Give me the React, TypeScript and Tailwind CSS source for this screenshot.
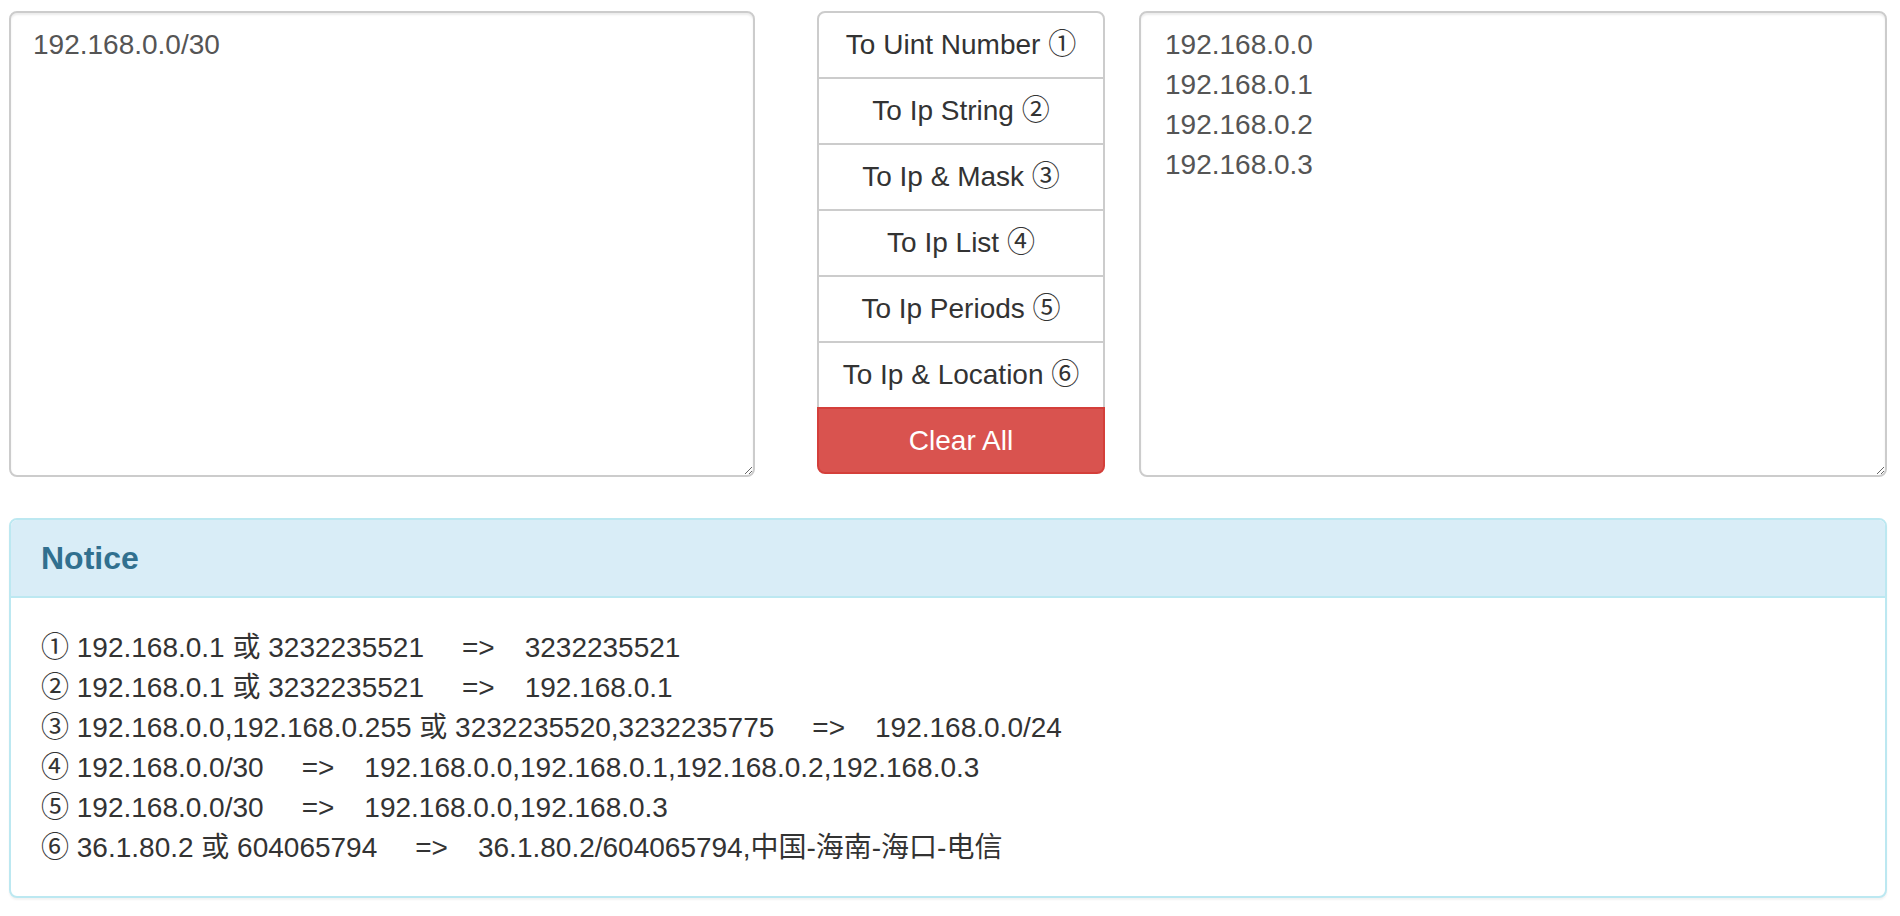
import { useState } from 'react'

const font = { fontFamily: '"Liberation Sans", "Noto Sans CJK SC", sans-serif' }

const buttons = [
  'To Uint Number ①',
  'To Ip String ②',
  'To Ip & Mask ③',
  'To Ip List ④',
  'To Ip Periods ⑤',
  'To Ip & Location ⑥',
]

const notices: [string, string][] = [
  ['① 192.168.0.1 或 3232235521', '3232235521'],
  ['② 192.168.0.1 或 3232235521', '192.168.0.1'],
  ['③ 192.168.0.0,192.168.0.255 或 3232235520,3232235775', '192.168.0.0/24'],
  ['④ 192.168.0.0/30', '192.168.0.0,192.168.0.1,192.168.0.2,192.168.0.3'],
  ['⑤ 192.168.0.0/30', '192.168.0.0,192.168.0.3'],
  ['⑥ 36.1.80.2 或 604065794', '36.1.80.2/604065794,中国-海南-海口-电信'],
]

export default function App() {
  const [input, setInput] = useState('192.168.0.0/30')
  const [output, setOutput] = useState('192.168.0.0\n192.168.0.1\n192.168.0.2\n192.168.0.3')

  return (
    <div className="min-h-screen bg-white pl-[9px] pr-[13px] pt-[11px]" style={font}>
      {/* Converter */}
      <div className="flex items-start">
        <textarea
          value={input}
          onChange={(e) => setInput(e.target.value)}
          className="h-[466px] w-[746px] rounded-[8px] border-2 border-[#ccc] px-[22px] py-[12px] text-[28px] leading-[40px] text-[#555] shadow-[inset_0_2px_2px_rgba(0,0,0,0.075)] outline-none"
        />

        <div className="ml-[62px] flex w-[288px] flex-col">
          {buttons.map((label, i) => (
            <button
              key={label}
              className={`h-[68px] border-2 border-[#ccc] bg-white text-[28px] leading-[40px] text-[#333] ${
                i === 0 ? 'rounded-t-[8px]' : '-mt-[2px]'
              }`}
            >
              {label}
            </button>
          ))}
          <button
            onClick={() => {
              setInput('')
              setOutput('')
            }}
            className="-mt-[2px] h-[67px] rounded-b-[8px] border-2 border-[#d43f3a] bg-[#d9534f] text-[28px] leading-[40px] text-white"
          >
            Clear All
          </button>
        </div>

        <textarea
          value={output}
          onChange={(e) => setOutput(e.target.value)}
          className="ml-[34px] h-[466px] flex-1 rounded-[8px] border-2 border-[#ccc] px-[24px] py-[12px] text-[28px] leading-[40px] text-[#555] shadow-[inset_0_2px_2px_rgba(0,0,0,0.075)] outline-none"
        />
      </div>

      {/* Notice */}
      <div className="mt-[41px] rounded-[8px] border-2 border-[#bce8f1] bg-white shadow-[0_2px_2px_rgba(0,0,0,0.05)]">
        <div className="rounded-t-[6px] border-b-2 border-[#bce8f1] bg-[#d9edf7] px-[30px] py-[20px]">
          <h3 className="text-[32px] font-bold leading-[36px] text-[#31708f]">Notice</h3>
        </div>
        <div className="px-[30px] pb-[28px] pt-[30px] text-[28px] leading-[40px] text-[#333]">
          {notices.map(([from, to]) => (
            <div key={from} className="whitespace-nowrap">
              {from}
              <span className="ml-[38px] mr-[30px]">=&gt;</span>
              {to}
            </div>
          ))}
        </div>
      </div>
    </div>
  )
}
